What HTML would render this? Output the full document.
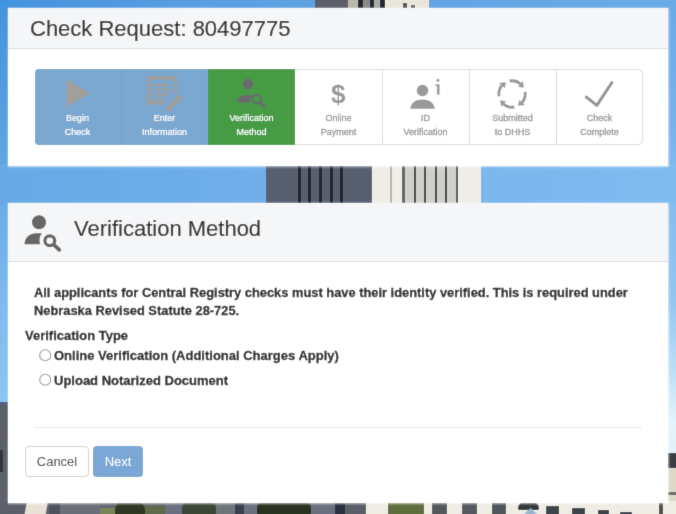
<!DOCTYPE html>
<html><head><meta charset="utf-8">
<style>
*{box-sizing:border-box;margin:0;padding:0}
html,body{width:676px;height:514px;overflow:hidden;background:#6aabe7}
body{position:relative;font-family:"Liberation Sans",sans-serif;color:#2a2a2a}
.sk{-webkit-text-stroke-width:0.3px}
.lbl{-webkit-text-stroke-width:0.3px}
.lbl.w{-webkit-text-stroke-width:0.2px}
.a{position:absolute}
.t{position:absolute;white-space:nowrap}
#wrap{position:absolute;left:-6px;top:-6px;width:688px;height:526px;filter:url(#bl)}
#in{position:absolute;left:6px;top:6px;width:676px;height:514px}
.lbl{position:absolute;top:112px;width:87px;text-align:center;font-size:9px;line-height:13.5px;color:#969696;white-space:nowrap}
</style></head><body><svg width="0" height="0" style="position:absolute"><filter id="bl" x="0" y="0" width="100%" height="100%"><feConvolveMatrix order="3" kernelMatrix="0 1 0 1 6 1 0 1 0" divisor="10" edgeMode="duplicate" preserveAlpha="true"/></filter></svg>
<div id="wrap"><div id="in">
<div>
<!-- sky strips -->
<div class="a" style="left:-6px;top:-6px;width:688px;height:16px;background:linear-gradient(90deg,#4393de 6px,#5a9ee2 209px,#69aae6 649px,#6aabe7 688px)"></div>
<div class="a" style="left:-6px;top:-6px;width:16px;height:526px;background:linear-gradient(180deg,#4393de 6px,#529edf 109px,#66a9e6 190px,#7dbaf0 309px,#8cc4f2 402px)"></div>
<div class="a" style="left:666px;top:-6px;width:16px;height:526px;background:linear-gradient(180deg,#69aae6 6px,#76b0e8 109px,#80bbf0 190px,#95c6f0 309px,#bde0f7 379px,#e4f4fb 429px,#e0f0f8 461px)"></div>
<div class="a" style="left:-6px;top:164px;width:688px;height:41px;background:linear-gradient(90deg,#66a9e6 6px,#68ace6 106px,#6faeea 249px,#7bb7ee 509px,#7db9ef 600px,#80bbf0 682px)"></div>

<!-- top strip building -->
<div class="a" style="left:315px;top:-6px;width:114px;height:16px;background:#e9e6dc"></div>
<div class="a" style="left:315px;top:-6px;width:33px;height:16px;background:#5b5f68"></div>
<div class="a" style="left:348px;top:-6px;width:10px;height:16px;background:#b9b6ac"></div>
<div class="a" style="left:358px;top:-6px;width:5px;height:16px;background:#22262e"></div>
<div class="a" style="left:363px;top:-6px;width:7px;height:16px;background:#8a8a88"></div>
<div class="a" style="left:370px;top:-6px;width:4px;height:16px;background:#22262e"></div>
<div class="a" style="left:374px;top:-6px;width:6px;height:16px;background:#a8a8a4"></div>
<div class="a" style="left:380px;top:-6px;width:5px;height:16px;background:#22262e"></div>
<div class="a" style="left:403px;top:3px;width:4px;height:6px;background:#55575c"></div>
<div class="a" style="left:411px;top:5px;width:4px;height:4px;background:#66686c"></div>

<!-- between panels building -->
<div class="a" style="left:266px;top:164px;width:215px;height:41px;background:#efeee6"></div>
<div class="a" style="left:266px;top:164px;width:106px;height:41px;background:#586070"></div>
<div class="a" style="left:298px;top:164px;width:3px;height:41px;background:#20242c"></div>
<div class="a" style="left:308px;top:164px;width:3px;height:41px;background:#20242c"></div>
<div class="a" style="left:319px;top:164px;width:3px;height:41px;background:#20242c"></div>
<div class="a" style="left:330px;top:164px;width:3px;height:41px;background:#20242c"></div>
<div class="a" style="left:340px;top:164px;width:3px;height:41px;background:#20242c"></div>
<div class="a" style="left:390px;top:164px;width:2px;height:41px;background:#b8b6ae"></div>
<div class="a" style="left:403px;top:164px;width:55px;height:41px;background:#cfcfcc"></div>
<div class="a" style="left:402px;top:164px;width:3px;height:41px;background:#606266"></div>
<div class="a" style="left:414px;top:164px;width:2px;height:41px;background:#3a3c40"></div>
<div class="a" style="left:424px;top:164px;width:2px;height:41px;background:#3a3c40"></div>
<div class="a" style="left:435px;top:164px;width:2px;height:41px;background:#3a3c40"></div>
<div class="a" style="left:445px;top:164px;width:2px;height:41px;background:#3a3c40"></div>
<div class="a" style="left:456px;top:164px;width:2px;height:41px;background:#55575c"></div>

<!-- left strip building -->
<div class="a" style="left:-6px;top:402px;width:16px;height:118px;background:linear-gradient(180deg,#4e6280 0,#5a5e68 6px,#5e626c 100%)"></div>
<div class="a" style="left:-6px;top:450px;width:9px;height:22px;background:#30343e"></div>
<!-- right strip building -->
<div class="a" style="left:666px;top:453px;width:16px;height:67px;background:#ddd8c8"></div>
<div class="a" style="left:666px;top:453px;width:16px;height:15px;background:#3a3e44"></div>
<div class="a" style="left:666px;top:492px;width:16px;height:3px;background:#6a6a66"></div>

<!-- bottom strip -->
<div class="a" style="left:-6px;top:501px;width:688px;height:19px;background:#62666f"></div>
<div class="a" style="left:-6px;top:501px;width:33px;height:19px;background:#5a5f6a"></div>
<div class="a" style="left:27px;top:501px;width:21px;height:19px;background:#e8e2d4;transform:skewX(-10deg);transform-origin:0 0"></div>
<div class="a" style="left:49px;top:501px;width:11px;height:19px;background:#4e535c"></div>
<div class="a" style="left:60px;top:501px;width:40px;height:19px;background:#6a6e76"></div>
<div class="a" style="left:100px;top:508px;width:15px;height:12px;background:#7a8458"></div>
<div class="a" style="left:115px;top:502px;width:30px;height:18px;background:#2e3824;border-radius:8px 8px 0 0"></div>
<div class="a" style="left:145px;top:506px;width:20px;height:14px;background:#5e6a48"></div>
<div class="a" style="left:165px;top:501px;width:17px;height:19px;background:#6a7080"></div>
<div class="a" style="left:182px;top:502px;width:34px;height:18px;background:#3e4636;border-radius:6px 6px 0 0"></div>
<div class="a" style="left:216px;top:501px;width:19px;height:19px;background:#70747c"></div>
<div class="a" style="left:235px;top:501px;width:9px;height:19px;background:#3a4050"></div>
<div class="a" style="left:244px;top:501px;width:13px;height:19px;background:#6a7080"></div>
<div class="a" style="left:257px;top:502px;width:54px;height:18px;background:#2c3222;border-radius:6px 6px 0 0"></div>
<div class="a" style="left:311px;top:501px;width:24px;height:19px;background:#6a7080"></div>
<div class="a" style="left:335px;top:501px;width:10px;height:19px;background:#2a3040"></div>
<div class="a" style="left:345px;top:501px;width:21px;height:19px;background:#5a5e68"></div>
<div class="a" style="left:366px;top:501px;width:316px;height:19px;background:#eeece3"></div>
<div class="a" style="left:388px;top:502px;width:36px;height:18px;background:#5f6e3e"></div>
<div class="a" style="left:432px;top:503px;width:15px;height:17px;background:#55585c"></div>
<div class="a" style="left:462px;top:503px;width:15px;height:17px;background:#55585c"></div>
<div class="a" style="left:492px;top:503px;width:14px;height:17px;background:#505458"></div>
<div class="a" style="left:518px;top:502px;width:21px;height:8px;background:#34383c;border-radius:8px 8px 2px 2px"></div>
<div class="a" style="left:523px;top:508px;width:15px;height:12px;background:#9ab4cc;clip-path:polygon(50% 0,100% 60%,100% 100%,0 100%,0 60%)"></div>
<div class="a" style="left:546px;top:506px;width:13px;height:14px;background:#3e444c"></div>
<div class="a" style="left:572px;top:508px;width:13px;height:12px;background:#3e444c"></div>
<div class="a" style="left:598px;top:510px;width:11px;height:10px;background:#3e444c"></div>
<div class="a" style="left:620px;top:512px;width:12px;height:8px;background:#3e444c"></div>
<div class="a" style="left:659px;top:501px;width:4px;height:19px;background:#505050"></div>
</div>

<!-- Panel 1 -->
<div class="a" style="left:8px;top:8px;width:660px;height:158px;background:#fff;box-shadow:0 0 2px 0.5px rgba(255,255,255,.6)"></div>
<div class="a" style="left:8px;top:8px;width:660px;height:41px;background:#f5f6f8;border-bottom:1px solid #dfdfe2"></div>
<div class="t" style="left:30px;top:16px;font-size:22px;line-height:26px;color:#333;-webkit-text-stroke-width:0.2px">Check Request: 80497775</div>

<!-- steps -->
<div class="a" style="left:35px;top:69px;width:608px;height:76px;border:1px solid #dcdcdc;border-radius:4px;background:#fff"></div>
<div class="a" style="left:35px;top:69px;width:608px;height:76px;border-radius:4px;overflow:hidden">
  <div class="a" style="left:0;top:0;width:173px;height:76px;background:#7aa8d0"></div>
  <div class="a" style="left:86px;top:0;width:1px;height:76px;background:#72a0c9"></div>
  <div class="a" style="left:173px;top:0;width:87px;height:76px;background:#469b45"></div>
  <div class="a" style="left:347px;top:0;width:1px;height:76px;background:#dcdcdc"></div>
  <div class="a" style="left:434px;top:0;width:1px;height:76px;background:#dcdcdc"></div>
  <div class="a" style="left:521px;top:0;width:1px;height:76px;background:#dcdcdc"></div>
</div>
<div class="lbl w" style="left:34px;color:#fff">Begin<br>Check</div>
<div class="lbl w" style="left:121px;color:#fff">Enter<br>Information</div>
<div class="lbl w" style="left:208px;color:#fff">Verification<br>Method</div>
<div class="lbl" style="left:295px">Online<br>Payment</div>
<div class="lbl" style="left:382px">ID<br>Verification</div>
<div class="lbl" style="left:469px">Submitted<br>to DHHS</div>
<div class="lbl" style="left:556px">Check<br>Complete</div>
<div class="t" style="left:331px;top:78px;font-size:26px;line-height:32px;font-weight:bold;color:#999">$</div>

<!-- Panel 2 -->
<div class="a" style="left:8px;top:203px;width:660px;height:300px;background:#fff;box-shadow:0 0 2px 0.5px rgba(255,255,255,.6)"></div>
<div class="a" style="left:8px;top:203px;width:660px;height:59px;background:#f5f6f8;border-bottom:1px solid #dfdfe2"></div>
<div class="t" style="left:74px;top:216px;font-size:22px;line-height:26px;color:#333;-webkit-text-stroke-width:0.2px">Verification Method</div>
<div class="t sk" style="left:34px;top:284px;font-size:12.86px;line-height:18px;font-weight:bold">All applicants for Central Registry checks must have their identity verified. This is required under<br>Nebraska Revised Statute 28-725.</div>
<div class="t sk" style="left:25px;top:328px;font-size:13px;line-height:16px;font-weight:bold">Verification Type</div>
<div class="t sk" style="left:54px;top:348px;font-size:13px;line-height:16px;font-weight:bold">Online Verification (Additional Charges Apply)</div>
<div class="t sk" style="left:54px;top:373px;font-size:13px;line-height:16px;font-weight:bold">Upload Notarized Document</div>
<div class="a" style="left:34px;top:427px;width:608px;height:1px;background:#eaeaea"></div>
<div class="a" style="left:25px;top:446px;width:64px;height:31px;border:1px solid #d2d2d2;border-radius:4px;background:#fff"></div>
<div class="t" style="left:25px;top:454px;width:64px;text-align:center;font-size:13px;line-height:16px;color:#3a3a3a">Cancel</div>
<div class="a" style="left:93px;top:446px;width:50px;height:31px;border-radius:4px;background:#7aa7d5"></div>
<div class="t" style="left:93px;top:454px;width:50px;text-align:center;font-size:13px;line-height:16px;color:#fff">Next</div>

<svg class="a" style="left:0;top:0" width="676" height="514" viewBox="0 0 676 514">
  <!-- begin check triangle -->
  <polygon points="66.8,79.3 66.8,106.5 89.8,93.2" fill="#a09f99"/>
  <!-- enter information doc -->
  <g fill="#9d9fa0">
    <rect x="147" y="76" width="30" height="4"/>
    <rect x="147" y="76" width="3.5" height="28.5"/>
    <rect x="147" y="101" width="16" height="3.5"/>
    <rect x="174" y="76" width="3" height="18"/>
    <rect x="153" y="84" width="17" height="2.5"/>
    <rect x="153" y="88.5" width="17" height="2.5"/>
    <rect x="153" y="93" width="17" height="2.5"/>
    <rect x="153" y="97.5" width="12" height="2.5"/>
    <path d="M179 94 L183 98 L170 111 L165 111.5 L166 107 Z"/>
  </g>
  <!-- verification method (green) -->
  <g fill="#6b6a6e">
    <circle cx="248" cy="84" r="5.2"/>
    <path d="M237 102.5 C237.5 97 241 95 246 95 L252 95 C250 97 249.5 100 250.5 102.5 Z"/>
    <circle cx="256.5" cy="99" r="4.3" fill="none" stroke="#6b6a6e" stroke-width="2"/>
    <path d="M259.5 102 L264.5 107" stroke="#6b6a6e" stroke-width="2.6" stroke-linecap="round"/>
  </g>
  <!-- ID verification -->
  <g fill="#999">
    <circle cx="422.5" cy="90.5" r="5.8"/>
    <path d="M410.3 108.8 C410.8 102.5 416 99.5 422.5 99.5 C429 99.5 434.2 102.5 434.7 108.8 Z"/>
    <circle cx="437.9" cy="80.3" r="1.5"/>
    <path d="M435.5 84.3 L439.5 84.3 L439.5 94.8 L437 94.8 L437 86 L435.5 86 Z"/>
  </g>
  <!-- refresh -->
  <g transform="translate(512,94)" fill="#999">
    <g id="arc1"><path d="M-2.29 -13.00 A13.2 13.2 0 0 1 8.48 -10.11" fill="none" stroke="#999" stroke-width="2.8"/><path d="M10.93 -13.02 L6.04 -7.20 L11.83 -6.13 Z"/></g>
    <use href="#arc1" transform="rotate(90)"/>
    <use href="#arc1" transform="rotate(180)"/>
    <use href="#arc1" transform="rotate(270)"/>
  </g>
  <!-- check -->
  <polyline points="586.3,97 596.8,105.4 611.9,82.7" fill="none" stroke="#959595" stroke-width="3" stroke-linecap="round" stroke-linejoin="round"/>
  <!-- header verification icon -->
  <g fill="#666" transform="translate(0,0.2)">
    <circle cx="39" cy="222" r="7"/>
    <path d="M24.5 244 C25 236.5 30 233 36 233 L42 233 C39.5 236 38.8 240.5 40.5 244 Z"/>
    <circle cx="49.8" cy="240.5" r="4.9" fill="none" stroke="#666" stroke-width="3.2"/>
    <path d="M53.8 244.5 L59.3 249.6" stroke="#666" stroke-width="3.8" stroke-linecap="round"/>
  </g>
  <!-- radios -->
  <circle cx="45.2" cy="355.3" r="5.5" fill="#fff" stroke="#999" stroke-width="1.1"/>
  <circle cx="45.2" cy="379.8" r="5.5" fill="#fff" stroke="#999" stroke-width="1.1"/>
</svg>
</div></div></body></html>
